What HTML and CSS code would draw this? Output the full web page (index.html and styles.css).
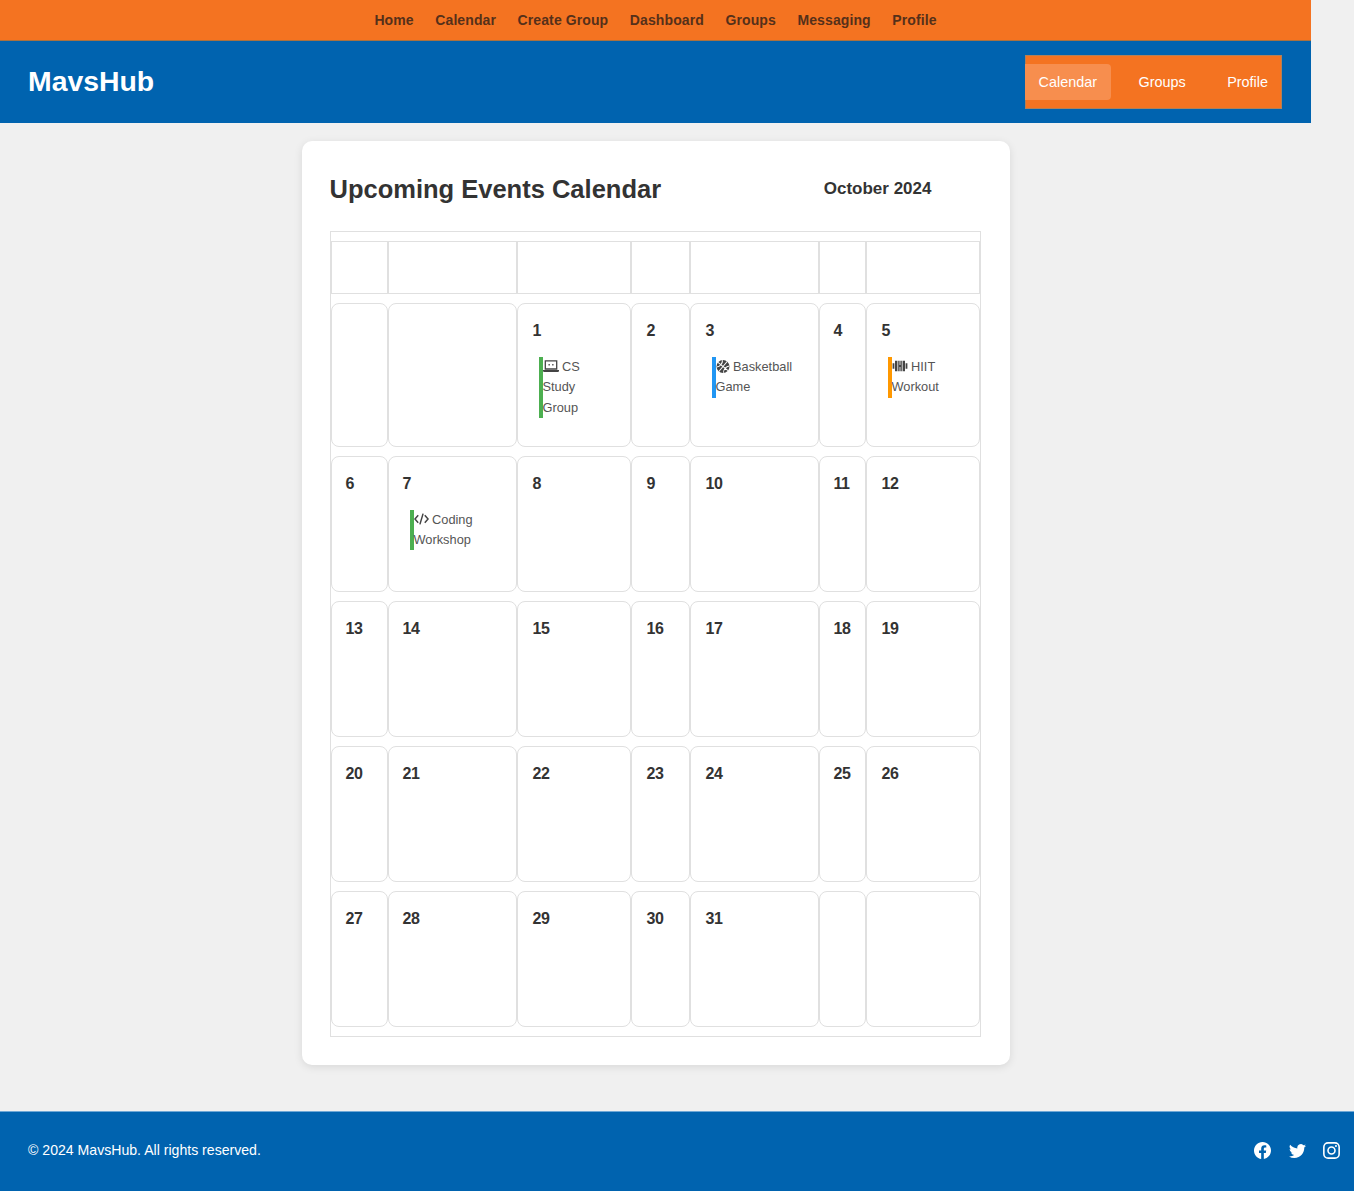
FILE: index.html
```html
<!DOCTYPE html>
<html lang="en">
<head>
<meta charset="utf-8">
<title>MavsHub</title>
<link rel="stylesheet" href="styles.css">
</head>
<body>
<div class="shell">
  <nav class="topnav">
    <a href="#">Home</a><a href="#">Calendar</a><a href="#">Create Group</a><a href="#">Dashboard</a><a href="#">Groups</a><a href="#">Messaging</a><a href="#">Profile</a>
  </nav>
  <header class="masthead">
    <div class="logo">MavsHub</div>
    <nav class="subnav">
      <a href="#" class="active">Calendar</a><a href="#">Groups</a><a href="#">Profile</a>
    </nav>
  </header>
  <main class="main">
    <section class="card">
      <div class="card-head">
        <h1>Upcoming Events Calendar</h1>
        <h2>October 2024</h2>
      </div>
      <table class="cal">
        <colgroup>
          <col class="c1"><col class="c2"><col class="c3"><col class="c4"><col class="c5"><col class="c6"><col class="c7">
        </colgroup>
        <thead>
          <tr><th></th><th></th><th></th><th></th><th></th><th></th><th></th></tr>
        </thead>
        <tbody>
          <tr>
            <td></td><td></td>
            <td><div class="num">1</div>
              <div class="ev green"><svg class="ico" viewBox="0 0 16 12"><path d="M2.300 .8h11.400v8.200H2.300z" fill="none" stroke="currentColor" stroke-width="1.300"/><path d="M0 10h16v.8a1.200 1.200 0 0 1-1.200 1.200H1.200A1.200 1.200 0 0 1 0 10.800z" fill="currentColor"/><path d="M5.500 4h1.300v1.600H5.500zM9.200 4h1.300v1.600H9.200z" fill="currentColor"/></svg> CS Study Group</div></td>
            <td><div class="num">2</div></td>
            <td><div class="num">3</div>
              <div class="ev blue"><svg class="ico ball" viewBox="0 0 16 16"><circle cx="8" cy="8" r="8" fill="currentColor"/><g transform="rotate(40 8 8)"><path d="M8 0v16M0 8h16M2.500 2.500c2.800 2.800 2.800 8.200 0 11M13.500 2.500c-2.800 2.800-2.800 8.200 0 11" fill="none" stroke="#fff" stroke-width="1.300"/></g></svg> Basketball Game</div></td>
            <td><div class="num">4</div></td>
            <td><div class="num">5</div>
              <div class="ev orange"><svg class="ico" viewBox="0 0 16 12"><path d="M.6 3.200h1.800v5.600H.6zM3 .8h2.400v10.400H3zM6.200 .8h1.400v4.200h.8V.8h1.400v10.400H8.400V7h-.8v4.200H6.200zM10.600 .8H13v10.400h-2.400zM13.600 3.200h1.800v5.600h-1.800z" fill="currentColor"/></svg> HIIT Workout</div></td>
          </tr>
          <tr class="plain">
            <td><div class="num">6</div></td>
            <td><div class="num">7</div>
              <div class="ev green"><svg class="ico code" viewBox="0 0 16 12"><path d="M4.500 2 1 6l3.500 4M11.500 2 15 6l-3.500 4M9.700 .3 6.300 11.700" fill="none" stroke="currentColor" stroke-width="1.600"/></svg> Coding Workshop</div></td>
            <td><div class="num">8</div></td><td><div class="num">9</div></td><td><div class="num">10</div></td><td><div class="num">11</div></td><td><div class="num">12</div></td>
          </tr>
          <tr class="plain">
            <td><div class="num">13</div></td><td><div class="num">14</div></td><td><div class="num">15</div></td><td><div class="num">16</div></td><td><div class="num">17</div></td><td><div class="num">18</div></td><td><div class="num">19</div></td>
          </tr>
          <tr class="plain">
            <td><div class="num">20</div></td><td><div class="num">21</div></td><td><div class="num">22</div></td><td><div class="num">23</div></td><td><div class="num">24</div></td><td><div class="num">25</div></td><td><div class="num">26</div></td>
          </tr>
          <tr class="plain">
            <td><div class="num">27</div></td><td><div class="num">28</div></td><td><div class="num">29</div></td><td><div class="num">30</div></td><td><div class="num">31</div></td><td></td><td></td>
          </tr>
        </tbody>
      </table>
    </section>
  </main>
</div>
<footer class="footer">
  <p>© 2024 MavsHub. All rights reserved.</p>
  <div class="social">
    <svg viewBox="0 0 16 16"><path fill="currentColor" d="M16 8.049c0-4.446-3.582-8.050-8-8.050C3.580 0-.002 3.603-.002 8.050c0 4.017 2.926 7.347 6.750 7.951v-5.625h-2.030V8.050H6.750V6.275c0-2.017 1.195-3.131 3.022-3.131.876 0 1.791.157 1.791.157v1.980h-1.009c-.993 0-1.303.621-1.303 1.258v1.510h2.218l-.354 2.326H9.250V16c3.824-.604 6.750-3.934 6.750-7.951z"/></svg>
    <svg viewBox="0 0 16 16"><path fill="currentColor" d="M5.026 15c6.038 0 9.341-5.003 9.341-9.334 0-.140 0-.282-.010-.422A6.680 6.680 0 0 0 16 3.542a6.658 6.658 0 0 1-1.889.518 3.301 3.301 0 0 0 1.447-1.817 6.533 6.533 0 0 1-2.087.793A3.286 3.286 0 0 0 7.875 6.030a9.325 9.325 0 0 1-6.767-3.429 3.289 3.289 0 0 0 1.018 4.382A3.323 3.323 0 0 1 .640 6.575v.045a3.288 3.288 0 0 0 2.632 3.218 3.203 3.203 0 0 1-.865.115 3.230 3.230 0 0 1-.614-.057 3.283 3.283 0 0 0 3.067 2.277A6.588 6.588 0 0 1 .780 13.580a6.320 6.320 0 0 1-.780-.045A9.344 9.344 0 0 0 5.026 15z"/></svg>
    <svg viewBox="0 0 16 16"><rect x=".8" y=".8" width="14.400" height="14.400" rx="4" fill="none" stroke="currentColor" stroke-width="1.500"/><circle cx="8" cy="8" r="3.300" fill="none" stroke="currentColor" stroke-width="1.500"/><circle cx="12.200" cy="3.800" r="1" fill="currentColor"/></svg>
  </div>
</footer>
</body>
</html>
```
FILE: styles.css
```css
* { box-sizing: border-box; }
html, body { margin: 0; padding: 0; }
body {
  background: #f0f0f0;
  font-family: "Liberation Sans", Arial, sans-serif;
  color: #333;
}
a { text-decoration: none; }
.shell { width: 1311px; }

.topnav {
  height: 41px;
  background: #f47321;
  border-bottom: 1px solid #a9713f;
  display: flex;
  justify-content: center;
  align-items: center;
  gap: 21.600px;
}
.topnav a {
  color: #55301a;
  font-size: 14px;
  font-weight: 700;
  letter-spacing: .1px;
}

.masthead {
  height: 82px;
  background: #0063af;
  display: flex;
  justify-content: space-between;
  align-items: center;
  padding: 0 29px 0 28px;
}
.logo {
  color: #fff;
  font-size: 28.400px;
  line-height: 32px;
  font-weight: 700;
  padding-bottom: 2px;
}
.subnav {
  height: 54px;
  display: flex;
  align-items: center;
  gap: 13.500px;
  background: #f47321;
  box-shadow: inset 0 0 0 1px #b08058;
}
.subnav a {
  color: #fff;
  font-size: 14.400px;
  line-height: 36px;
  padding: 0 14px;
  border-radius: 0 4px 4px 0;
}
.subnav a.active { background: #f78e4e; }

.main {
  padding: 18px 0 46px;
  display: flex;
  justify-content: center;
}
.card {
  width: 708px;
  background: #fff;
  border-radius: 10px;
  box-shadow: 0 2px 8px rgba(0, 0, 0, .1);
  padding: 28px;
}
.card-head {
  height: 62px;
  display: flex;
  justify-content: space-between;
  align-items: flex-start;
  padding-right: 50px;
}
.card-head h1 {
  margin: 0;
  font-size: 25.500px;
  line-height: 40px;
  font-weight: 700;
  color: #333;
}
.card-head h2 {
  margin: 0;
  font-size: 17px;
  line-height: 40px;
  font-weight: 700;
  color: #333;
}

.cal {
  width: 651px;
  table-layout: fixed;
  border-collapse: separate;
  border-spacing: 0 9px;
  border: 1px solid #e0e0e0;
}
.c1 { width: 57px; }
.c2 { width: 129px; }
.c3 { width: 114px; }
.c4 { width: 59px; }
.c5 { width: 129px; }
.c6 { width: 47px; }
.c7 { width: 114px; }
.cal th {
  height: 53px;
  padding: 0;
  border: 1px solid #e0e0e0;
}
.cal td {
  height: 136px;
  padding: 17px 15px 15px;
  vertical-align: top;
  border: 1px solid #e0e0e0;
  border-radius: 8px;
}
.cal td:nth-child(1),
.cal td:nth-child(2),
.cal td:nth-child(6) { padding-left: 14px; }
.cal td:nth-child(2) .ev { margin-left: 7px; }
.num {
  font-size: 16px;
  line-height: 20px;
  letter-spacing: -.4px;
  font-weight: 700;
  color: #333;
}
.ev {
  margin: 16px 6px 13px 6px;
  border-left: 4px solid #4caf50;
  font-size: 12.800px;
  line-height: 20.300px;
  color: #555;
}
.green { border-left-color: #4caf50; }
.blue { border-left-color: #2196f3; }
.orange { border-left-color: #ff9800; }
.ico {
  width: 16px;
  height: 12px;
  vertical-align: -1px;
  color: #444;
}
.ball { width: 14px; height: 13px; vertical-align: -2px; }
.code { width: 15px; }

.footer {
  height: 80px;
  background: #0063af;
  border-top: 1px solid #6fa8d6;
  display: flex;
  justify-content: space-between;
  align-items: center;
  padding: 0 14px 2px 28px;
  color: #fff;
}
.footer p {
  margin: 0;
  font-size: 14.100px;
}
.social {
  display: flex;
  gap: 17.500px;
}
.social svg {
  width: 17px;
  height: 17px;
  color: #fff;
}
```
